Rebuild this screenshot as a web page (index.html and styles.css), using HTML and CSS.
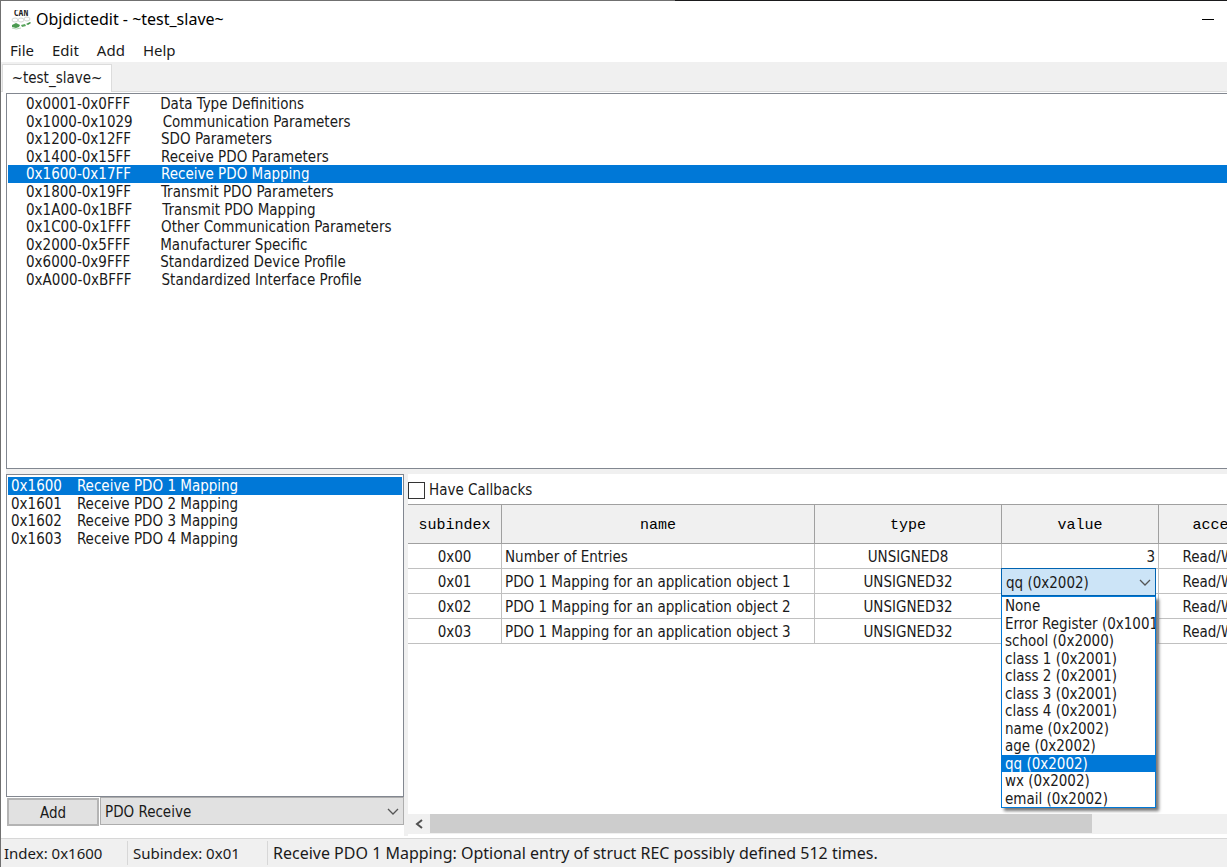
FILE: index.html
```html
<!DOCTYPE html>
<html lang="en">
<head>
<meta charset="utf-8">
<title>Objdictedit - ~test_slave~</title>
<link rel="stylesheet" href="styles.css">
</head>
<body>
<div class="window">
  <header class="titlebar">
    <svg class="app-icon" viewBox="0 0 20 20" aria-hidden="true">
      <text class="app-icon-text" x="10" y="6" text-anchor="middle">CAN</text>
      <g fill="none" stroke="#d4d8d4"><ellipse cx="4" cy="10" rx="3" ry="2"/><ellipse cx="10" cy="10" rx="3" ry="2"/><ellipse cx="16" cy="9" rx="3" ry="2"/></g>
      <path d="M1 15l4-2 4 2-1 2-3 1-4-1z" fill="#4b9a50"/>
      <path d="M10 15l4-1 1 2-4 1z" fill="#58a55c"/>
      <path d="M15 14l4-2 1 1-3 2z" fill="#3f8f45"/>
      <path d="M1 18q4 2 9 0" fill="none" stroke="#b5d6b6"/>
    </svg>
    <h1 class="title">Objdictedit - ~test_slave~</h1>
    <button class="minimize" aria-label="Minimize"><svg viewBox="0 0 12 12"><path d="M0 5.5h12" stroke="#000"/></svg></button>
  </header>
  <nav class="menubar">
    <button>File</button><button>Edit</button><button>Add</button><button>Help</button>
  </nav>
  <div class="tabs"><button class="tab">~test_slave~</button></div>
  <main class="page">
    <ul class="listbox sections">
      <li><span>0x0001-0x0FFF</span><span>Data Type Definitions</span></li>
      <li><span>0x1000-0x1029</span><span>Communication Parameters</span></li>
      <li><span>0x1200-0x12FF</span><span>SDO Parameters</span></li>
      <li><span>0x1400-0x15FF</span><span>Receive PDO Parameters</span></li>
      <li class="selected"><span>0x1600-0x17FF</span><span>Receive PDO Mapping</span></li>
      <li><span>0x1800-0x19FF</span><span>Transmit PDO Parameters</span></li>
      <li><span>0x1A00-0x1BFF</span><span>Transmit PDO Mapping</span></li>
      <li><span>0x1C00-0x1FFF</span><span>Other Communication Parameters</span></li>
      <li><span>0x2000-0x5FFF</span><span>Manufacturer Specific</span></li>
      <li><span>0x6000-0x9FFF</span><span>Standardized Device Profile</span></li>
      <li><span>0xA000-0xBFFF</span><span>Standardized Interface Profile</span></li>
    </ul>
    <div class="lower">
      <section class="left">
        <ul class="listbox indexes">
          <li class="selected"><span>0x1600</span><span>Receive PDO 1 Mapping</span></li>
          <li><span>0x1601</span><span>Receive PDO 2 Mapping</span></li>
          <li><span>0x1602</span><span>Receive PDO 3 Mapping</span></li>
          <li><span>0x1603</span><span>Receive PDO 4 Mapping</span></li>
        </ul>
        <div class="add-row">
          <button class="add">Add</button>
          <div class="choice">
            <select aria-label="Object kind"><option>PDO Receive</option></select>
            <svg class="chevron" viewBox="0 0 12 8"><path d="M1 1l5 5 5-5"/></svg>
          </div>
        </div>
      </section>
      <section class="right">
        <label class="callbacks"><input type="checkbox">Have Callbacks</label>
        <div class="grid-area">
          <table class="grid">
            <colgroup><col class="c-sub"><col class="c-name"><col class="c-type"><col class="c-value"><col class="c-access"></colgroup>
            <thead><tr><th>subindex</th><th>name</th><th>type</th><th>value</th><th>access</th></tr></thead>
            <tbody>
              <tr><td>0x00</td><td class="name">Number of Entries</td><td>UNSIGNED8</td><td class="num">3</td><td>Read/Write</td></tr>
              <tr><td>0x01</td><td class="name">PDO 1 Mapping for an application object 1</td><td>UNSIGNED32</td>
                <td class="editing">
                  <div class="editor">
                    <div class="choice open">
                      <select aria-label="Value"><option>qq (0x2002)</option></select>
                      <svg class="chevron" viewBox="0 0 12 8"><path d="M1 1l5 5 5-5"/></svg>
                    </div>
                    <ul class="dropdown">
                      <li>None</li><li>Error Register (0x1001)</li><li>school (0x2000)</li><li>class 1 (0x2001)</li><li>class 2 (0x2001)</li><li>class 3 (0x2001)</li><li>class 4 (0x2001)</li><li>name (0x2002)</li><li>age (0x2002)</li><li class="selected">qq (0x2002)</li><li>wx (0x2002)</li><li>email (0x2002)</li>
                    </ul>
                  </div>
                </td><td>Read/Write</td></tr>
              <tr><td>0x02</td><td class="name">PDO 1 Mapping for an application object 2</td><td>UNSIGNED32</td><td></td><td>Read/Write</td></tr>
              <tr><td>0x03</td><td class="name">PDO 1 Mapping for an application object 3</td><td>UNSIGNED32</td><td></td><td>Read/Write</td></tr>
            </tbody>
          </table>
        </div>
        <div class="scrollbar">
          <button class="scroll-left" aria-label="Scroll left"><svg viewBox="0 0 8 10"><path d="M7 1L2 5l5 4"/></svg></button>
          <div class="track"><div class="thumb"></div></div>
        </div>
      </section>
    </div>
  </main>
  <footer class="status">
    <span class="s-index">Index: 0x1600</span><span class="s-sub">Subindex: 0x01</span><span class="s-text">Receive PDO 1 Mapping: Optional entry of struct REC possibly defined 512 times.</span>
  </footer>
</div>
</body>
</html>
```
FILE: styles.css
```css
* { box-sizing: border-box; }
body {
  margin: 0;
  overflow: hidden;
  background: #fff;
  color: #1a1a1a;
  font: 15px/17px "DejaVu Sans Condensed", "DejaVu Sans", sans-serif;
}
button, select, input { font: inherit; color: inherit; margin: 0; }
button { border: 0; padding: 0; background: none; }
ul { list-style: none; margin: 0; padding: 0; }

.window {
  display: flex;
  flex-direction: column;
  height: 100vh;
  border-left: 1px solid #707070;
  padding-top: 1px;
  background: linear-gradient(90deg, #707070 55%, #1a1a1c 55%) top / 100% 1px no-repeat;
}
.titlebar, .menubar, .status { font-family: "Noto Sans", sans-serif; }
.titlebar { display: flex; align-items: center; height: 37px; padding: 0 13px 0 10px; color: #000; flex: none; }
.app-icon { width: 20px; height: 20px; margin-right: 5px; }
.app-icon-text { font: bold 8px "DejaVu Sans Mono", monospace; fill: #222; }
.title { flex: 1; margin: 0; font-size: 16px; font-weight: 400; }
.minimize { width: 12px; height: 12px; }
.minimize svg { display: block; }

.menubar { display: flex; gap: 18px; height: 24px; padding-left: 9px; flex: none; }
.tabs { height: 30px; background: #f0f0f0; border-bottom: 1px solid #dcdcdc; padding: 2px 0 0 1px; flex: none; }
.tab { height: 28px; width: 110px; background: #fff; border: 1px solid #dcdcdc; border-bottom: 0; }

.page { flex: 1; display: flex; flex-direction: column; min-height: 0; padding: 1px 0 2px 5px; }
.listbox { border: 1px solid #828790; background: #fff; padding: 2px 1px 1px; }
.listbox li { display: flex; align-items: center; white-space: nowrap; padding-top: 2px; }
.sections { height: 376px; border-right: 0; padding-right: 0; display: grid; grid-template-rows: repeat(11, minmax(0, 1fr)); padding-top: 1px; padding-bottom: 180px; flex: none; }
.sections li { gap: 30px; padding-left: 18px; }
.indexes { flex: 1 1 0; min-height: 0; display: grid; grid-template-rows: repeat(4, minmax(0, 1fr)); padding-bottom: 249px; }
.indexes li { gap: 15px; padding-left: 3px; }
.selected { background: #0078d7; color: #fff; }

.lower { flex: 1; display: flex; min-height: 0; border-top: 5px solid #f0f0f0; }
.left { width: 398px; display: flex; flex-direction: column; flex: none; padding-bottom: 10px; }
.add-row { display: flex; gap: 1px; height: 29px; padding-left: 1px; flex: none; }
.add { width: 92px; height: 28px; margin-top: 1px; padding-top: 2px; background: #e1e1e1; border: 2px solid #b4b4b4; }
.choice { position: relative; flex: 1; height: 28px; }
.choice select { appearance: none; width: 100%; height: 100%; padding: 2px 4px 0; border: 1px solid #adadad; border-radius: 0; background: #e1e1e1; }
.chevron { position: absolute; right: 5px; top: 11px; width: 12px; height: 8px; fill: none; stroke: #555; stroke-width: 1.3; pointer-events: none; }

.right { flex: 1; min-width: 0; display: flex; flex-direction: column; border-left: 4px solid #f0f0f0; }
.callbacks { display: flex; align-items: center; gap: 4px; height: 30px; padding-top: 2px; }
.callbacks input { appearance: none; width: 17px; height: 17px; border: 1px solid #333; background: #fff; }
.grid-area { flex: 1; overflow: hidden; min-height: 0; }
.grid { table-layout: fixed; width: 873px; border-collapse: separate; border-spacing: 0; border-top: 1px solid #a0a0a0; }
.c-sub { width: 94px; }
.c-name { width: 313px; }
.c-type { width: 187px; }
.c-value { width: 157px; }
.c-access { width: 122px; }
.grid th { height: 39px; padding: 2px 0 0; background: #f0f0f0; border-right: 1px solid #a0a0a0; border-bottom: 1px solid #a0a0a0; color: #000; font: 15px/17px "Liberation Mono", monospace; }
.grid td { height: 25px; padding: 2px 3px 0; text-align: center; white-space: nowrap; border-right: 1px solid #c0c0c0; border-bottom: 1px solid #c0c0c0; }
.grid .name { text-align: left; }
.grid .num { text-align: right; }
.grid .editing { position: relative; }
.editor { position: absolute; left: -1px; top: -1px; width: 155px; z-index: 1; text-align: left; }
.open { height: 28px; }
.open select { background: #cce4f7; border-color: #0063b1; }
.dropdown { display: grid; grid-template-rows: repeat(12, minmax(0, 1fr)); height: 212px; border: 1px solid #0078d7; background: #fff; box-shadow: 3px 3px 3px #777; }
.dropdown li { padding-left: 3px; overflow: hidden; line-height: 18px; }

.scrollbar { display: flex; height: 20px; background: #f0f0f0; margin-bottom: 2px; }
.scroll-left { width: 22px; height: 20px; }
.scroll-left svg { width: 8px; height: 10px; display: block; margin: 0 auto; fill: none; stroke: #505050; stroke-width: 2; }
.track { flex: 1; }
.thumb { width: 83%; height: 19px; background: #cdcdcd; }

.status { display: flex; align-items: center; height: 29px; background: #f0f0f0; border-top: 1px solid #d7d7d7; flex: none; white-space: nowrap; }
.status span { height: 24px; line-height: 24px; }
.s-index { width: 127px; padding-left: 3px; border-right: 1px solid #d7d7d7; }
.s-sub { width: 140px; padding-left: 5px; border-right: 1px solid #d7d7d7; }
.s-text { padding-left: 5px; font-size: 16px; }
```
